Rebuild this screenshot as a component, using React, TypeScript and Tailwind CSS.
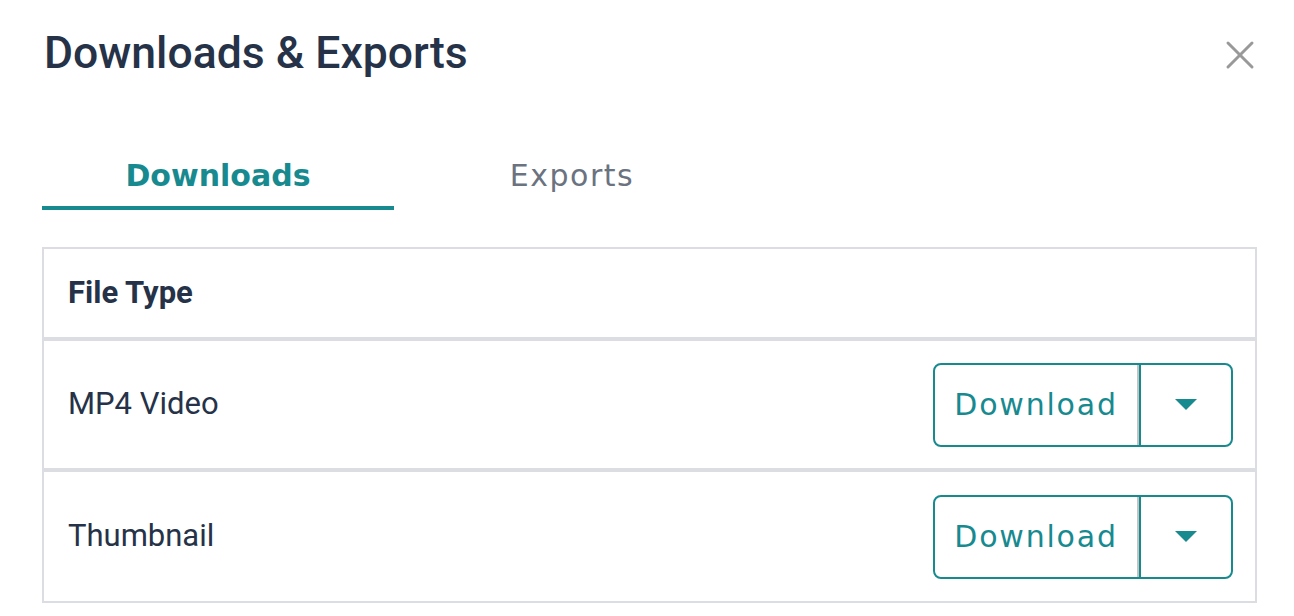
import { X } from "lucide-react";

const rows = [
  { name: "MP4 Video", h: "h-[131px] border-b-4 border-[#dcdde3]" },
  { name: "Thumbnail", h: "h-[129px]" },
];

function SplitButton() {
  return (
    <div className="flex h-[84px] w-[300px] rounded-[8px] border-2 border-[#178a90] bg-white">
      <button className="flex flex-1 items-center justify-center border-r-2 border-[#c4c4c4] text-[30px] tracking-[1.8px] text-[#178a90] [font-family:'DejaVu_Sans',sans-serif]">
        Download
      </button>
      <button className="flex w-[92px] items-center justify-center border-l-2 border-[#178a90]">
        <svg width="22" height="12" viewBox="0 0 22 12">
          <path d="M0 0 L22 0 L11 11 Z" fill="#178a90" />
        </svg>
      </button>
    </div>
  );
}

export default function App() {
  return (
    <div className="h-[616px] w-[1294px] overflow-hidden bg-white px-[42px] [font-family:Roboto,sans-serif]">
      {/* Header */}
      <div className="flex items-start justify-between pt-[27px]">
        <h1 className="ml-[2px] text-[44.5px] font-medium leading-[52px] text-[#253248]">Downloads &amp; Exports</h1>
        <button className="mr-[-12px] mt-[4px] text-[#999999]">
          <X className="h-[48px] w-[48px]" strokeWidth={1.5} />
        </button>
      </div>

      {/* Tabs */}
      <div className="mt-[78px] flex [font-family:'DejaVu_Sans',sans-serif]">
        <div className="flex h-[53px] w-[352px] flex-col items-center justify-between">
          <span className="text-[30px] font-bold leading-[38px] text-[#178a90]">Downloads</span>
          <div className="h-[4px] w-full bg-[#178a90]" />
        </div>
        <div className="flex h-[53px] w-[356px] items-start justify-center">
          <span className="text-[30px] leading-[38px] tracking-[1.5px] text-[#6b7280]">Exports</span>
        </div>
      </div>

      {/* Table */}
      <div className="mt-[37px] w-[1215px] border-2 border-[#dcdde3]">
        <div className="flex h-[92px] items-center border-b-4 border-[#dcdde3] pl-[24px] text-[31px] font-bold text-[#253248]">
          File Type
        </div>
        {rows.map((r) => (
          <div key={r.name} className={`flex items-center justify-between pl-[24px] pr-[22px] ${r.h}`}>
            <span className="text-[31px] text-[#253248]">{r.name}</span>
            <SplitButton />
          </div>
        ))}
      </div>
    </div>
  );
}
